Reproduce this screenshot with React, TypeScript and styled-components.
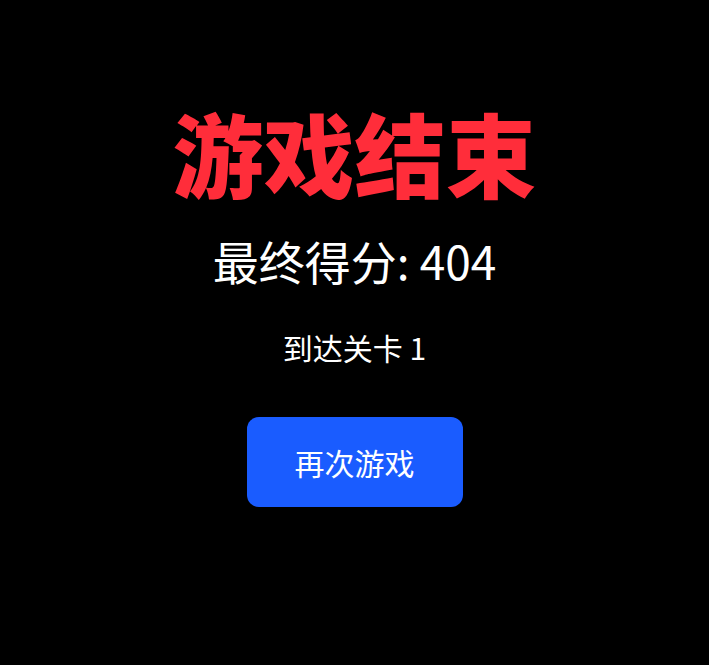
import React from "react";
import styled, { createGlobalStyle } from "styled-components";

const Global = createGlobalStyle`
  html, body { margin: 0; padding: 0; background: #000; }
  body { font-family: "Noto Sans CJK SC", "Noto Sans", sans-serif; color: #fff; }
`;

const Screen = styled.div`
  min-height: 665px;
  display: flex;
  flex-direction: column;
  align-items: center;
  padding-top: 93px;
  box-sizing: border-box;
`;

const Title = styled.h1`
  margin: 0;
  font-size: 91px;
  line-height: 116px;
  font-weight: 900;
  color: #ff2d3a;
`;

const Score = styled.div`
  margin-top: 21px;
  font-size: 46px;
  line-height: 60px;
  font-weight: 400;
`;

const Level = styled.div`
  margin-top: 37px;
  font-size: 30px;
  line-height: 40px;
`;

const Button = styled.button`
  margin-top: 50px;
  width: 216px;
  height: 90px;
  border: none;
  border-radius: 12px;
  background: #1a5cff;
  color: #fff;
  font-family: inherit;
  font-size: 30px;
  cursor: pointer;
`;

export default function App() {
  return (
    <>
      <Global />
      <Screen>
        <Title>游戏结束</Title>
        <Score>最终得分: 404</Score>
        <Level>到达关卡 1</Level>
        <Button>再次游戏</Button>
      </Screen>
    </>
  );
}
